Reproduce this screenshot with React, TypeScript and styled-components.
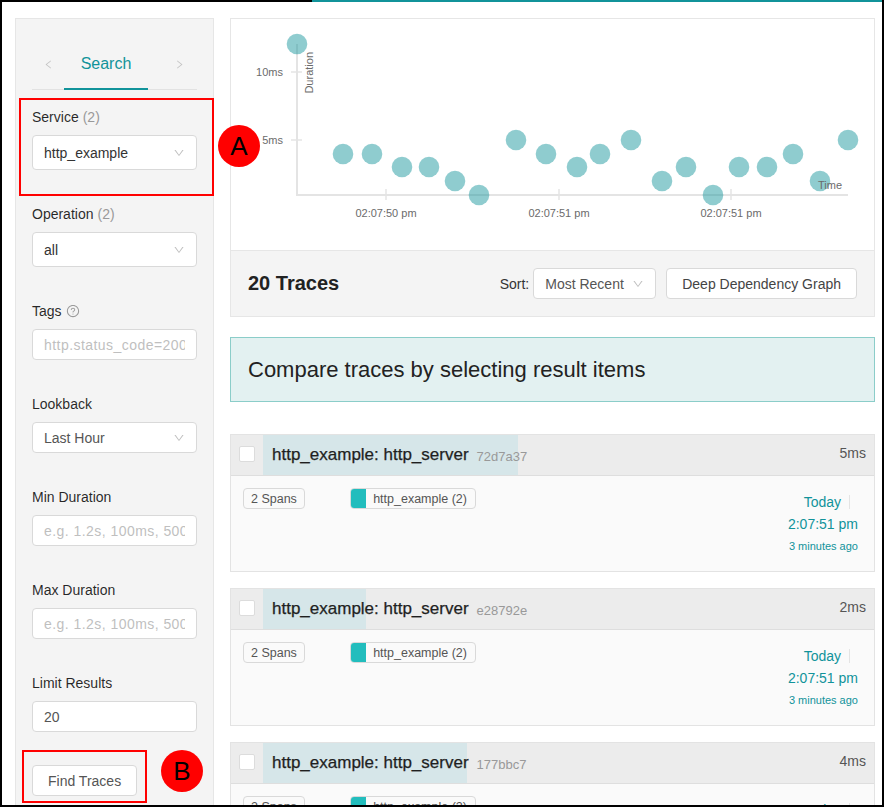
import React from "react";
import styled, { createGlobalStyle } from "styled-components";
import { AiOutlineQuestionCircle, AiOutlineDown, AiOutlineLeft, AiOutlineRight } from "react-icons/ai";

const GlobalStyle = createGlobalStyle`
  html, body { margin: 0; padding: 0; background: #fff; }
  body { font-family: "Liberation Sans", Arial, sans-serif; color: rgba(0,0,0,0.85); }
  * { box-sizing: border-box; }
`;

const TEAL = "#11939a";

const Frame = styled.div`
  width: 884px;
  height: 807px;
  overflow: hidden;
  display: flex;
  flex-direction: column;
  border-left: 2px solid #000;
  border-right: 2px solid #000;
  border-bottom: 2px solid #000;
  background: #fff;
`;

const TopEdge = styled.div`
  height: 2px;
  display: flex;
  flex: none;
`;

const EdgeSegment = styled.div<{ $color: string; $width?: number }>`
  background: ${(p) => p.$color};
  ${(p) => (p.$width ? `width: ${p.$width}px;` : "flex: 1;")}
`;

const Content = styled.div`
  flex: 1;
  min-height: 0;
  display: flex;
  gap: 16px;
  padding: 16px 7px 0 13px;
`;

const Sidebar = styled.aside`
  width: 199px;
  flex: none;
  background: #f4f4f4;
  border: 1px solid #e6e6e6;
  border-bottom: none;
  padding: 0 16px;
  position: relative;
  z-index: 2;
`;

const TabsNav = styled.div`
  margin-top: 21px;
  display: flex;
  align-items: stretch;
  border-bottom: 1px solid #e2e2e2;
`;

const TabArrow = styled.div<{ $w: number }>`
  width: ${(p) => p.$w}px;
  display: flex;
  align-items: center;
  justify-content: center;
  color: #c4c4c4;
  font-size: 11px;
`;

const Spacer = styled.div`
  flex: 1;
`;

const Tab = styled.div`
  width: 84px;
  text-align: center;
  padding: 12px 0;
  font-size: 16px;
  line-height: 24px;
  color: ${TEAL};
  border-bottom: 2px solid ${TEAL};
  margin-bottom: -1px;
`;

const Form = styled.div`
  padding-top: 16px;
`;

const Field = styled.div`
  margin-bottom: 33px;
  position: relative;
`;

const Label = styled.div`
  font-size: 14px;
  line-height: 22px;
  height: 22px;
  margin-bottom: 7px;
  color: rgba(0, 0, 0, 0.85);
  display: flex;
  align-items: center;
`;

const Count = styled.span`
  color: #999;
  margin-left: 4px;
`;

const HelpIcon = styled.span`
  display: inline-flex;
  margin-left: 4px;
  color: #9a9a9a;
  font-size: 14px;
`;

const SelectBox = styled.div<{ $tall?: boolean }>`
  height: ${(p) => (p.$tall ? 35 : 31)}px;
  background: #fff;
  border: 1px solid #d9d9d9;
  border-radius: 4px;
  padding: 0 11px;
  display: flex;
  align-items: center;
  justify-content: space-between;
  font-size: 14px;
  color: ${(p) => (p.$tall ? "#333" : "#555")};
`;

const Chevron = styled.span`
  display: inline-flex;
  color: #c0c0c0;
  font-size: 12px;
`;

const TextInput = styled.input`
  display: block;
  width: 100%;
  height: 31px;
  background: #fff;
  border: 1px solid #d9d9d9;
  border-radius: 4px;
  padding: 0 11px;
  font-family: "Liberation Sans", Arial, sans-serif;
  font-size: 14px;
  color: #555;
  outline: none;
  &::placeholder {
    color: #bfbfbf;
    letter-spacing: 0.45px;
  }
`;

const ButtonWrap = styled.div`
  position: relative;
  display: inline-block;
`;

const Button = styled.button`
  height: 31px;
  padding: 0 15px;
  background: #fff;
  border: 1px solid #d9d9d9;
  border-radius: 4px;
  font-family: "Liberation Sans", Arial, sans-serif;
  font-size: 14px;
  color: #555;
  white-space: nowrap;
`;

const AnnotationBox = styled.div<{ $l: number; $t: number; $r: number; $b: number }>`
  position: absolute;
  left: ${(p) => p.$l}px;
  top: ${(p) => p.$t}px;
  right: ${(p) => p.$r}px;
  bottom: ${(p) => p.$b}px;
  border: 2px solid #ff0000;
  pointer-events: none;
`;

const AnnotationBadge = styled.div<{ $l: number; $t: number }>`
  position: absolute;
  left: ${(p) => p.$l}px;
  top: ${(p) => p.$t}px;
  width: 42px;
  height: 42px;
  border-radius: 50%;
  background: #ff0000;
  color: #000;
  font-size: 26px;
  display: flex;
  align-items: center;
  justify-content: center;
  z-index: 5;
`;

const Main = styled.main`
  flex: 1;
  min-width: 0;
  display: flex;
  flex-direction: column;
`;

const ChartCard = styled.div`
  height: 233px;
  flex: none;
  border: 1px solid #e6e6e6;
  background: #fff;
`;

const ChartSvg = styled.svg`
  display: block;
  font-family: "Liberation Sans", Arial, sans-serif;
`;

const ResultsHeader = styled.div`
  height: 66px;
  flex: none;
  background: #f4f4f4;
  border: 1px solid #e6e6e6;
  border-top: none;
  padding: 0 17px;
  display: flex;
  align-items: center;
  justify-content: space-between;
`;

const ResultsTitle = styled.h2`
  margin: 0;
  font-size: 20px;
  font-weight: 700;
  color: #222;
`;

const HeaderControls = styled.div`
  display: flex;
  align-items: center;
`;

const SortLabel = styled.span`
  font-size: 14px;
  color: #333;
  margin-right: 4px;
`;

const SortSelect = styled(SelectBox)`
  width: 123px;
  padding: 0 11px 0 11px;
  margin-right: 10px;
  color: #555;
`;

const HeaderButton = styled(Button)`
  padding: 0 15px;
  color: #444;
`;

const CompareBox = styled.div`
  margin-top: 20px;
  height: 65px;
  flex: none;
  background: #e3f1f1;
  border: 1px solid #8bcdc9;
  padding: 0 17px;
  display: flex;
  align-items: center;
  font-size: 22px;
  color: #222;
`;

const TraceList = styled.div`
  margin-top: 32px;
  display: flex;
  flex-direction: column;
  gap: 16px;
`;

const TraceCard = styled.div`
  border: 1px solid #e3e3e3;
  flex: none;
`;

const TraceHeader = styled.div`
  height: 41px;
  background: #ececec;
  border-bottom: 1px solid #dedede;
  display: flex;
  align-items: stretch;
`;

const CheckCell = styled.div`
  width: 32px;
  padding-left: 8px;
  display: flex;
  align-items: center;
`;

const Checkbox = styled.span`
  width: 16px;
  height: 16px;
  background: #fff;
  border: 1px solid #dcdcdc;
  border-radius: 2px;
  margin-top: -2px;
`;

const TitleArea = styled.div`
  flex: 1;
  position: relative;
  display: flex;
  align-items: center;
  padding: 0 8px 0 9px;
`;

const DurationBar = styled.div`
  position: absolute;
  left: 0;
  top: 0;
  bottom: 0;
  background: #d6e6e9;
`;

const TraceTitle = styled.span`
  position: relative;
  font-size: 17px;
  color: #1f1f1f;
  -webkit-text-stroke: 0.25px #1f1f1f;
`;

const TraceId = styled.span`
  position: relative;
  font-size: 13px;
  color: #999;
  margin-left: 8px;
  margin-top: 2px;
`;

const TraceDuration = styled.span`
  position: relative;
  margin-left: auto;
  font-size: 14px;
  color: #555;
  margin-bottom: 4px;
`;

const TraceBody = styled.div`
  height: 95px;
  background: #fafafa;
  display: grid;
  grid-template-columns: 4fr 16fr 4fr;
  padding-top: 12px;
`;

const Col = styled.div<{ $right?: boolean }>`
  padding: ${(p) => (p.$right ? "3px 16px 0 12px" : "0 12px")};
  text-align: ${(p) => (p.$right ? "right" : "left")};
`;

const Tag = styled.span`
  display: inline-flex;
  align-items: center;
  height: 21px;
  border: 1px solid #d9d9d9;
  border-radius: 4px;
  background: #fafafa;
  font-size: 12.5px;
  color: #555;
  padding: 0 7px;
  overflow: hidden;
  white-space: nowrap;
`;

const ServiceTag = styled(Tag)`
  padding: 0 8px 0 0;
`;

const ServiceColor = styled.span`
  width: 15px;
  align-self: stretch;
  background: #22bdbd;
  margin-right: 7px;
`;

const TimeLine = styled.div<{ $small?: boolean }>`
  font-size: ${(p) => (p.$small ? 11 : 14)}px;
  line-height: 22px;
  color: ${TEAL};
  white-space: nowrap;
`;

const Divider = styled.span`
  display: inline-block;
  width: 1px;
  height: 14px;
  background: #e4e4e4;
  margin: 0 8px;
  vertical-align: -2px;
`;

const points: [number, number][] = [
  [297, 44], [343, 154], [372, 154], [402, 167], [429, 167], [455, 181], [479, 195],
  [516, 140], [546, 154], [577, 167], [600, 154], [631, 140], [662, 181], [686, 167],
  [713, 195], [739, 167], [767, 167], [793, 154], [820, 181], [848, 140],
];

const xTicks = [386, 559, 731];
const xLabels = ["02:07:50 pm", "02:07:51 pm", "02:07:51 pm"];

function Chart() {
  const axis = "#e4e4e4";
  const text = "#6b6b6b";
  return (
    <ChartSvg width={643} height={231} viewBox="231 19 643 231">
      <line x1={297} y1={44} x2={297} y2={195} stroke={axis} strokeWidth={2} />
      <line x1={296} y1={195} x2={848} y2={195} stroke={axis} strokeWidth={2} />
      <line x1={291} y1={72} x2={302} y2={72} stroke={axis} strokeWidth={1.5} />
      <line x1={291} y1={140} x2={302} y2={140} stroke={axis} strokeWidth={1.5} />
      <text x={283} y={76} textAnchor="end" fontSize={11} fill={text}>10ms</text>
      <text x={283} y={144} textAnchor="end" fontSize={11} fill={text}>5ms</text>
      <text transform="translate(313,52) rotate(-90)" textAnchor="end" fontSize={11} fill={text}>Duration</text>
      {xTicks.map((x, i) => (
        <g key={i}>
          <line x1={x} y1={189} x2={x} y2={200} stroke={axis} strokeWidth={1.5} />
          <text x={x} y={217} textAnchor="middle" fontSize={11} fill={text}>{xLabels[i]}</text>
        </g>
      ))}
      {points.map(([cx, cy], i) => (
        <circle key={i} cx={cx} cy={cy} r={10.3} fill="#12939a" fillOpacity={0.47} />
      ))}
      <text x={818} y={189} fontSize={11} fill={text}>Time</text>
    </ChartSvg>
  );
}

type Trace = { id: string; duration: string; barWidth: number };

const traces: Trace[] = [
  { id: "72d7a37", duration: "5ms", barWidth: 255 },
  { id: "e28792e", duration: "2ms", barWidth: 103 },
  { id: "177bbc7", duration: "4ms", barWidth: 204 },
];

function TraceItem({ t }: { t: Trace }) {
  return (
    <TraceCard>
      <TraceHeader>
        <CheckCell>
          <Checkbox />
        </CheckCell>
        <TitleArea>
          <DurationBar style={{ width: t.barWidth }} />
          <TraceTitle>http_example: http_server</TraceTitle>
          <TraceId>{t.id}</TraceId>
          <TraceDuration>{t.duration}</TraceDuration>
        </TitleArea>
      </TraceHeader>
      <TraceBody>
        <Col>
          <Tag>2 Spans</Tag>
        </Col>
        <Col>
          <ServiceTag>
            <ServiceColor />
            http_example (2)
          </ServiceTag>
        </Col>
        <Col $right>
          <TimeLine>
            Today
            <Divider />
          </TimeLine>
          <TimeLine>2:07:51 pm</TimeLine>
          <TimeLine $small>3 minutes ago</TimeLine>
        </Col>
      </TraceBody>
    </TraceCard>
  );
}

export default function App() {
  return (
    <>
      <GlobalStyle />
      <Frame>
        <TopEdge>
          <EdgeSegment $color="#000" $width={310} />
          <EdgeSegment $color={TEAL} />
        </TopEdge>
        <Content>
          <Sidebar>
            <TabsNav>
              <TabArrow $w={32}>
                <AiOutlineLeft />
              </TabArrow>
              <Tab>Search</Tab>
              <Spacer />
              <TabArrow $w={36}>
                <AiOutlineRight />
              </TabArrow>
            </TabsNav>
            <Form>
              <Field>
                <Label>
                  Service<Count>(2)</Count>
                </Label>
                <SelectBox $tall>
                  http_example
                  <Chevron>
                    <AiOutlineDown />
                  </Chevron>
                </SelectBox>
                <AnnotationBox $l={-13} $t={-8} $r={-17} $b={-26} />
                <AnnotationBadge $l={186} $t={19}>A</AnnotationBadge>
              </Field>
              <Field>
                <Label>
                  Operation<Count>(2)</Count>
                </Label>
                <SelectBox $tall>
                  all
                  <Chevron>
                    <AiOutlineDown />
                  </Chevron>
                </SelectBox>
              </Field>
              <Field>
                <Label>
                  Tags
                  <HelpIcon>
                    <AiOutlineQuestionCircle />
                  </HelpIcon>
                </Label>
                <TextInput placeholder="http.status_code=200 error=true" />
              </Field>
              <Field>
                <Label>Lookback</Label>
                <SelectBox>
                  Last Hour
                  <Chevron>
                    <AiOutlineDown />
                  </Chevron>
                </SelectBox>
              </Field>
              <Field>
                <Label>Min Duration</Label>
                <TextInput placeholder="e.g. 1.2s, 100ms, 500us" />
              </Field>
              <Field>
                <Label>Max Duration</Label>
                <TextInput placeholder="e.g. 1.2s, 100ms, 500us" />
              </Field>
              <Field>
                <Label>Limit Results</Label>
                <TextInput defaultValue="20" />
              </Field>
              <ButtonWrap>
                <Button>Find Traces</Button>
                <AnnotationBox $l={-10} $t={-15} $r={-10} $b={-7} />
                <AnnotationBadge $l={129} $t={-15}>B</AnnotationBadge>
              </ButtonWrap>
            </Form>
          </Sidebar>
          <Main>
            <ChartCard>
              <Chart />
            </ChartCard>
            <ResultsHeader>
              <ResultsTitle>20 Traces</ResultsTitle>
              <HeaderControls>
                <SortLabel>Sort:</SortLabel>
                <SortSelect>
                  Most Recent
                  <Chevron>
                    <AiOutlineDown />
                  </Chevron>
                </SortSelect>
                <HeaderButton>Deep Dependency Graph</HeaderButton>
              </HeaderControls>
            </ResultsHeader>
            <CompareBox>Compare traces by selecting result items</CompareBox>
            <TraceList>
              {traces.map((t) => (
                <TraceItem key={t.id} t={t} />
              ))}
            </TraceList>
          </Main>
        </Content>
      </Frame>
    </>
  );
}
